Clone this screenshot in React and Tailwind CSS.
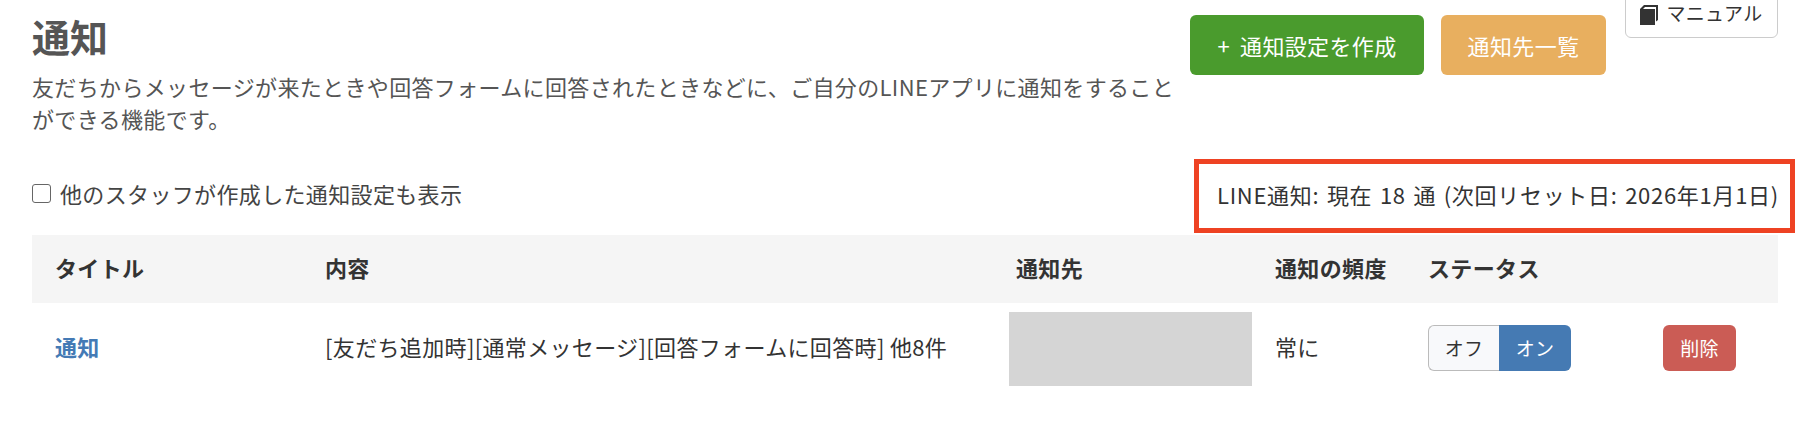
const BookIcon = () => (
  <svg width="18" height="20" viewBox="0 0 18 20" className="shrink-0">
    <path d="M0 4 L4 0 H18 V15 L16 16.5 V2 H5 L3 4 H15 V20 H0 Z" fill="#333" />
  </svg>
);

const App = () => {
  return (
    <div className="h-[428px] w-[1804px] overflow-hidden bg-white pl-8 pr-[26px] text-[22px] tracking-[0.35px] text-[#555] [font-family:'Noto_Sans_CJK_JP','Liberation_Sans',sans-serif]">
      <div className="flex h-[159px] justify-between">
        <div className="w-[1150px]">
          <h1 className="mt-[10px] text-[38px] leading-[52px] font-bold tracking-normal">通知</h1>
          <p className="mt-[8px] leading-8">
            友だちからメッセージが来たときや回答フォームに回答されたときなどに、ご自分のLINEアプリに通知をすることができる機能です。
          </p>
        </div>
        <div className="flex items-start">
          <button className="mt-[15px] flex h-[60px] w-[234px] items-center justify-center gap-[10px] rounded-md bg-[#4a9b2d] text-white">
            <span>+</span>
            <span>通知設定を作成</span>
          </button>
          <button className="mt-[15px] ml-[17px] h-[60px] w-[165px] rounded-md bg-[#e8af5f] text-white">
            通知先一覧
          </button>
          <button className="-mt-4 ml-[19px] flex h-[54px] w-[153px] items-end justify-center gap-[8px] rounded-md border border-[#ccc] bg-white pb-[12px] text-[19px] leading-6 text-[#333]">
            <BookIcon />
            マニュアル
          </button>
        </div>
      </div>

      <div className="flex h-[76px] items-start justify-between">
        <label className="mt-[22px] flex items-center gap-[9px] leading-6 text-[#444]">
          <input type="checkbox" className="h-[19px] w-[19px] appearance-none rounded-[3px] border border-[#666] bg-white" />
          他のスタッフが作成した通知設定も表示
        </label>
        <div className="-mr-[17px] flex h-[74px] w-[601px] items-center border-[5px] border-[#ee4223] pb-[3px] pl-[18px] tracking-[0.7px] text-[#333] [word-spacing:2px]">
          LINE通知: 現在 18 通 (次回リセット日: 2026年1月1日)
        </div>
      </div>

      <div className="grid h-[68px] grid-cols-[270px_690px_259px_154px_373px] items-center bg-[#f5f5f5] pb-[3px] font-bold text-[#333]">
        <div className="pl-[23px]">タイトル</div>
        <div className="pl-[23px]">内容</div>
        <div className="pl-6">通知先</div>
        <div className="pl-6">通知の頻度</div>
        <div className="pl-[23px]">ステータス</div>
      </div>

      <div className="grid h-[92px] grid-cols-[270px_690px_259px_154px_258px_115px] items-center text-[#333]">
        <a href="#" className="pb-[6px] pl-[23px] font-bold text-[#447ab5]">通知</a>
        <div className="pb-[6px] pl-[23px]">[友だち追加時][通常メッセージ][回答フォームに回答時] 他8件</div>
        <div className="pl-[17px]">
          <div className="h-[74px] w-[243px] bg-[#d5d5d5]" />
        </div>
        <div className="pb-[6px] pl-6">常に</div>
        <div className="-mt-[2px] flex pl-[23px] text-[19px]">
          <button className="h-[46px] w-[71px] rounded-l-md border border-[#bbb] border-r-0 bg-[#f8f9fb] text-[#333]">オフ</button>
          <button className="h-[46px] w-[72px] rounded-r-md bg-[#457ab3] text-white">オン</button>
        </div>
        <div className="-mt-[2px]">
          <button className="h-[46px] w-[73px] rounded-md bg-[#cb5c55] text-[19px] text-white">削除</button>
        </div>
      </div>
    </div>
  );
};

export default App;
